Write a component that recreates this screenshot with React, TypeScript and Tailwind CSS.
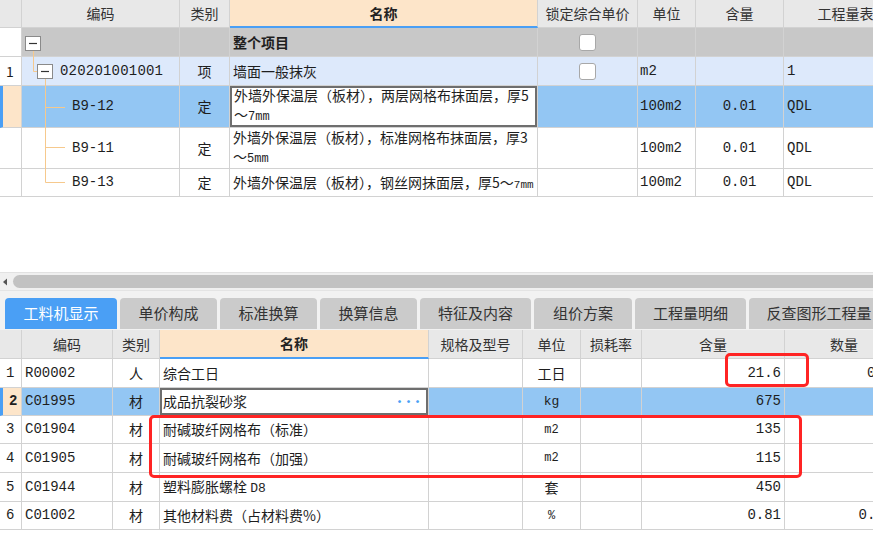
import React from "react";
import clsx from "clsx";

const cjk = "font-['Microsoft_YaHei','Noto_Sans_CJK_SC',sans-serif]";
const mono = "font-['Liberation_Mono','Noto_Sans_CJK_SC',monospace]";

const SEL = "bg-[#93c6f3]";
const HEAD = "bg-[#e8e8e8]";

function Cell({
  className,
  children,
}: {
  className?: string;
  children?: React.ReactNode;
}) {
  return (
    <div
      className={clsx(
        "flex items-center overflow-hidden whitespace-nowrap border-r border-b border-[#d2d2d2] text-[14px] text-[#1e1e1e]",
        className,
      )}
    >
      {children}
    </div>
  );
}

function Checkbox() {
  return (
    <span className="h-[17px] w-[17px] rounded-[3px] border border-[#a8a8a8] bg-white" />
  );
}

function HeaderCell({ children, name }: { children?: React.ReactNode; name?: boolean }) {
  if (name) {
    return (
      <Cell className="justify-center border-b-2 border-b-[#4a9ff5] bg-[#fde5c9] font-bold text-[#222]">
        {children}
      </Cell>
    );
  }
  return <Cell className={clsx("justify-center text-[#333]", HEAD)}>{children}</Cell>;
}

function TreeLines() {
  return (
    <svg
      className="pointer-events-none absolute left-0 top-0"
      width="80"
      height="197"
      viewBox="0 0 80 197"
    >
      <g stroke="#f6c98d" strokeWidth="1" fill="none">
        <path d="M33.5 50 V71.5 H38" />
        <path d="M45.5 79 V182.5" />
        <path d="M45.5 107.5 H65" />
        <path d="M45.5 147.5 H65" />
        <path d="M45.5 182.5 H65" />
      </g>
      <rect x="25.5" y="36.5" width="15" height="14" fill="#fff" stroke="#8a8a8a" />
      <path d="M29 43.5 H37" stroke="#333" strokeWidth="1.2" />
      <rect x="37.5" y="64.5" width="15" height="14" fill="#fff" stroke="#8a8a8a" />
      <path d="M41 71.5 H49" stroke="#333" strokeWidth="1.2" />
    </svg>
  );
}

function TopTable() {
  const grey = "bg-[#c8c8c8]";
  const lb = "bg-[#dde9fb]";
  return (
    <div className="relative">
      <div className="grid grid-cols-[22px_158px_50px_308px_100px_58px_88px_152px] grid-rows-[28px_29px_29px_42px_41px_28px]">
        {/* header */}
        <Cell className={HEAD} />
        <HeaderCell>编码</HeaderCell>
        <HeaderCell>类别</HeaderCell>
        <HeaderCell name>名称</HeaderCell>
        <HeaderCell>锁定综合单价</HeaderCell>
        <HeaderCell>单位</HeaderCell>
        <HeaderCell>含量</HeaderCell>
        <HeaderCell>工程量表达式</HeaderCell>

        {/* 整个项目 */}
        <Cell className="bg-white" />
        <Cell className={grey} />
        <Cell className={grey} />
        <Cell className={clsx(grey, "pl-[3px] font-bold")}>整个项目</Cell>
        <Cell className={clsx(grey, "justify-center")}>
          <Checkbox />
        </Cell>
        <Cell className={grey} />
        <Cell className={grey} />
        <Cell className={grey} />

        {/* row 1 */}
        <Cell className="bg-white pl-[6px]">1</Cell>
        <Cell className={clsx(lb, "pl-[38px] text-[13px]", mono)}>
          <span className="tracking-[0.2px]">020201001001</span>
        </Cell>
        <Cell className={clsx(lb, "justify-center")}>项</Cell>
        <Cell className={clsx(lb, "pl-[3px]")}>墙面一般抹灰</Cell>
        <Cell className={clsx(lb, "justify-center")}>
          <Checkbox />
        </Cell>
        <Cell className={clsx(lb, "pl-[2px] text-[12px]", mono)}>m2</Cell>
        <Cell className={lb} />
        <Cell className={clsx(lb, "pl-[3px] text-[12px]", mono)}>1</Cell>

        {/* B9-12 selected */}
        <Cell className="border-l-[3px] border-l-[#4a9ff5] bg-[#fde5c9]" />
        <Cell className={clsx(SEL, "pl-[50px] text-[12px]", mono)}>B9-12</Cell>
        <Cell className={clsx(SEL, "justify-center")}>定</Cell>
        <Cell className="bg-white p-0">
          <div className="flex h-full w-full flex-col justify-center whitespace-normal border-2 border-[#6e6e6e] pl-[2px] leading-[19px]">
            <span>外墙外保温层（板材），两层网格布抹面层，厚5</span>
            <span>
              ～<span className={clsx("text-[12px]", mono)}>7mm</span>
            </span>
          </div>
        </Cell>
        <Cell className={SEL} />
        <Cell className={clsx(SEL, "pl-[2px] text-[12px]", mono)}>100m2</Cell>
        <Cell className={clsx(SEL, "justify-center text-[12px]", mono)}>0.01</Cell>
        <Cell className={clsx(SEL, "pl-[3px] text-[12px]", mono)}>QDL</Cell>

        {/* B9-11 */}
        <Cell className="bg-white" />
        <Cell className={clsx("bg-white pl-[50px] text-[12px]", mono)}>B9-11</Cell>
        <Cell className="justify-center bg-white">定</Cell>
        <Cell className="bg-white pl-[3px]">
          <div className="flex flex-col leading-[19px]">
            <span>外墙外保温层（板材），标准网格布抹面层，厚3</span>
            <span>
              ～<span className={clsx("text-[12px]", mono)}>5mm</span>
            </span>
          </div>
        </Cell>
        <Cell className="bg-white" />
        <Cell className={clsx("bg-white pl-[2px] text-[12px]", mono)}>100m2</Cell>
        <Cell className={clsx("justify-center bg-white text-[12px]", mono)}>0.01</Cell>
        <Cell className={clsx("bg-white pl-[3px] text-[12px]", mono)}>QDL</Cell>

        {/* B9-13 */}
        <Cell className="bg-white" />
        <Cell className={clsx("bg-white pl-[50px] text-[12px]", mono)}>B9-13</Cell>
        <Cell className="justify-center bg-white">定</Cell>
        <Cell className="bg-white pl-[3px]">
          <span>
            外墙外保温层（板材），钢丝网抹面层，厚5～
            <span className={clsx("text-[11px]", mono)}>7mm</span>
          </span>
        </Cell>
        <Cell className="bg-white" />
        <Cell className={clsx("bg-white pl-[2px] text-[12px]", mono)}>100m2</Cell>
        <Cell className={clsx("justify-center bg-white text-[12px]", mono)}>0.01</Cell>
        <Cell className={clsx("bg-white pl-[3px] text-[12px]", mono)}>QDL</Cell>
      </div>
      <TreeLines />
    </div>
  );
}

const tabs = [
  { label: "工料机显示", w: "w-[112px]", active: true },
  { label: "单价构成", w: "w-[97px]" },
  { label: "标准换算", w: "w-[97px]" },
  { label: "换算信息", w: "w-[97px]" },
  { label: "特征及内容", w: "w-[111px]" },
  { label: "组价方案", w: "w-[98px]" },
  { label: "工程量明细", w: "w-[111px]" },
  { label: "反查图形工程量", w: "w-[140px]" },
];

function ScrollAndTabs() {
  return (
    <div className="bg-[#f2f2f2]">
      <div className="flex h-[18px] items-center border-t border-[#e2e2e2] bg-[#f0f0f0]">
        <svg width="10" height="10" viewBox="0 0 10 10" className="ml-[1px] shrink-0">
          <path d="M2 5 L6 1.5 V8.5 Z" fill="#555" />
        </svg>
        <div className="ml-[2px] h-[13px] flex-1 rounded-l-full bg-[#c2c2c2]" />
      </div>
      <div className="h-[8px] border-t border-[#e4e4e4]" />
      <div className="flex h-[32px] gap-[3px] pl-[5px]">
        {tabs.map((t) => (
          <div
            key={t.label}
            className={clsx(
              "flex h-[31px] shrink-0 items-center justify-center rounded-t-[4px] text-[15px]",
              t.w,
              t.active ? "bg-[#4a9ff5] text-white" : "bg-[#cbcbcb] text-[#333]",
            )}
          >
            {t.label}
          </div>
        ))}
      </div>
    </div>
  );
}

type Row = {
  n: string;
  code: string;
  kind: string;
  name: React.ReactNode;
  unit: React.ReactNode;
  qty: string;
  amount: string;
  sel?: boolean;
};

const rows: Row[] = [
  { n: "1", code: "R00002", kind: "人", name: "综合工日", unit: "工日", qty: "21.6", amount: "0.216" },
  {
    n: "2",
    code: "C01995",
    kind: "材",
    name: "成品抗裂砂浆",
    unit: <span className={clsx("text-[13px]", mono)}>kg</span>,
    qty: "675",
    amount: "6.75",
    sel: true,
  },
  {
    n: "3",
    code: "C01904",
    kind: "材",
    name: "耐碱玻纤网格布（标准）",
    unit: <span className={clsx("text-[12px]", mono)}>m2</span>,
    qty: "135",
    amount: "1.35",
  },
  {
    n: "4",
    code: "C01905",
    kind: "材",
    name: "耐碱玻纤网格布（加强）",
    unit: <span className={clsx("text-[12px]", mono)}>m2</span>,
    qty: "115",
    amount: "1.15",
  },
  {
    n: "5",
    code: "C01944",
    kind: "材",
    name: (
      <span>
        塑料膨胀螺栓 <span className={clsx("text-[13px]", mono)}>D8</span>
      </span>
    ),
    unit: "套",
    qty: "450",
    amount: "4.5",
  },
  {
    n: "6",
    code: "C01002",
    kind: "材",
    name: "其他材料费（占材料费%）",
    unit: <span className={clsx("text-[12px]", mono)}>%</span>,
    qty: "0.81",
    amount: "0.0081",
  },
];

const rowHeights = ["h-[29px]", "h-[28px]", "h-[28px]", "h-[29px]", "h-[29px]", "h-[28px]"];

function BottomTable() {
  const cols = "grid grid-cols-[22px_91px_47px_269px_94px_58px_61px_143px_128px]";
  return (
    <div className="relative">
      <div className={clsx(cols, "h-[29px]")}>
        <Cell className={HEAD} />
        <HeaderCell>编码</HeaderCell>
        <HeaderCell>类别</HeaderCell>
        <HeaderCell name>名称</HeaderCell>
        <HeaderCell>规格及型号</HeaderCell>
        <HeaderCell>单位</HeaderCell>
        <HeaderCell>损耗率</HeaderCell>
        <HeaderCell>含量</HeaderCell>
        <Cell className={clsx("pl-[45px] text-[#333]", HEAD)}>数量</Cell>
      </div>
      {rows.map((r, i) => {
        const bg = r.sel ? SEL : "bg-white";
        return (
          <div key={r.n} className={clsx(cols, rowHeights[i])}>
            <Cell
              className={clsx(
                "pl-[6px] text-[13px]",
                mono,
                r.sel
                  ? "border-l-[3px] border-l-[#4a9ff5] bg-[#fde5c9] pl-[3px] font-bold"
                  : "bg-white",
              )}
            >
              {r.n}
            </Cell>
            <Cell className={clsx(bg, "pl-[3px] text-[12px]", mono)}>{r.code}</Cell>
            <Cell className={clsx(bg, "justify-center")}>{r.kind}</Cell>
            {r.sel ? (
              <Cell className="bg-white">
                <div className="flex h-full w-full items-center justify-between border-2 border-[#6e6e6e] pl-[1px] pr-[5px]">
                  <span>{r.name}</span>
                  <span className="text-[11px] font-bold leading-none tracking-[-2px] text-[#4a9ff5]">···</span>
                </div>
              </Cell>
            ) : (
              <Cell className={clsx(bg, "pl-[3px]")}>{r.name}</Cell>
            )}
            <Cell className={bg} />
            <Cell className={clsx(bg, "justify-center")}>{r.unit}</Cell>
            <Cell className={bg} />
            <Cell className={clsx(bg, "justify-end pr-[3px] text-[12px]", mono)}>{r.qty}</Cell>
            <Cell className={clsx(bg, "justify-end pr-[3px] text-[12px]", mono)}>{r.amount}</Cell>
          </div>
        );
      })}
      {/* red annotation boxes */}
      <div className="pointer-events-none absolute left-[725px] top-[23px] h-[34px] w-[84px] rounded-[5px] border-[3px] border-[#ff2424]" />
      <div className="pointer-events-none absolute left-[149px] top-[85px] h-[63px] w-[653px] rounded-[5px] border-[3px] border-[#ff2424]" />
    </div>
  );
}

export default function App() {
  return (
    <div className={clsx("h-[546px] w-[873px] overflow-hidden bg-white", cjk)}>
      <TopTable />
      <div className="h-[75px] bg-white" />
      <ScrollAndTabs />
      <BottomTable />
    </div>
  );
}
